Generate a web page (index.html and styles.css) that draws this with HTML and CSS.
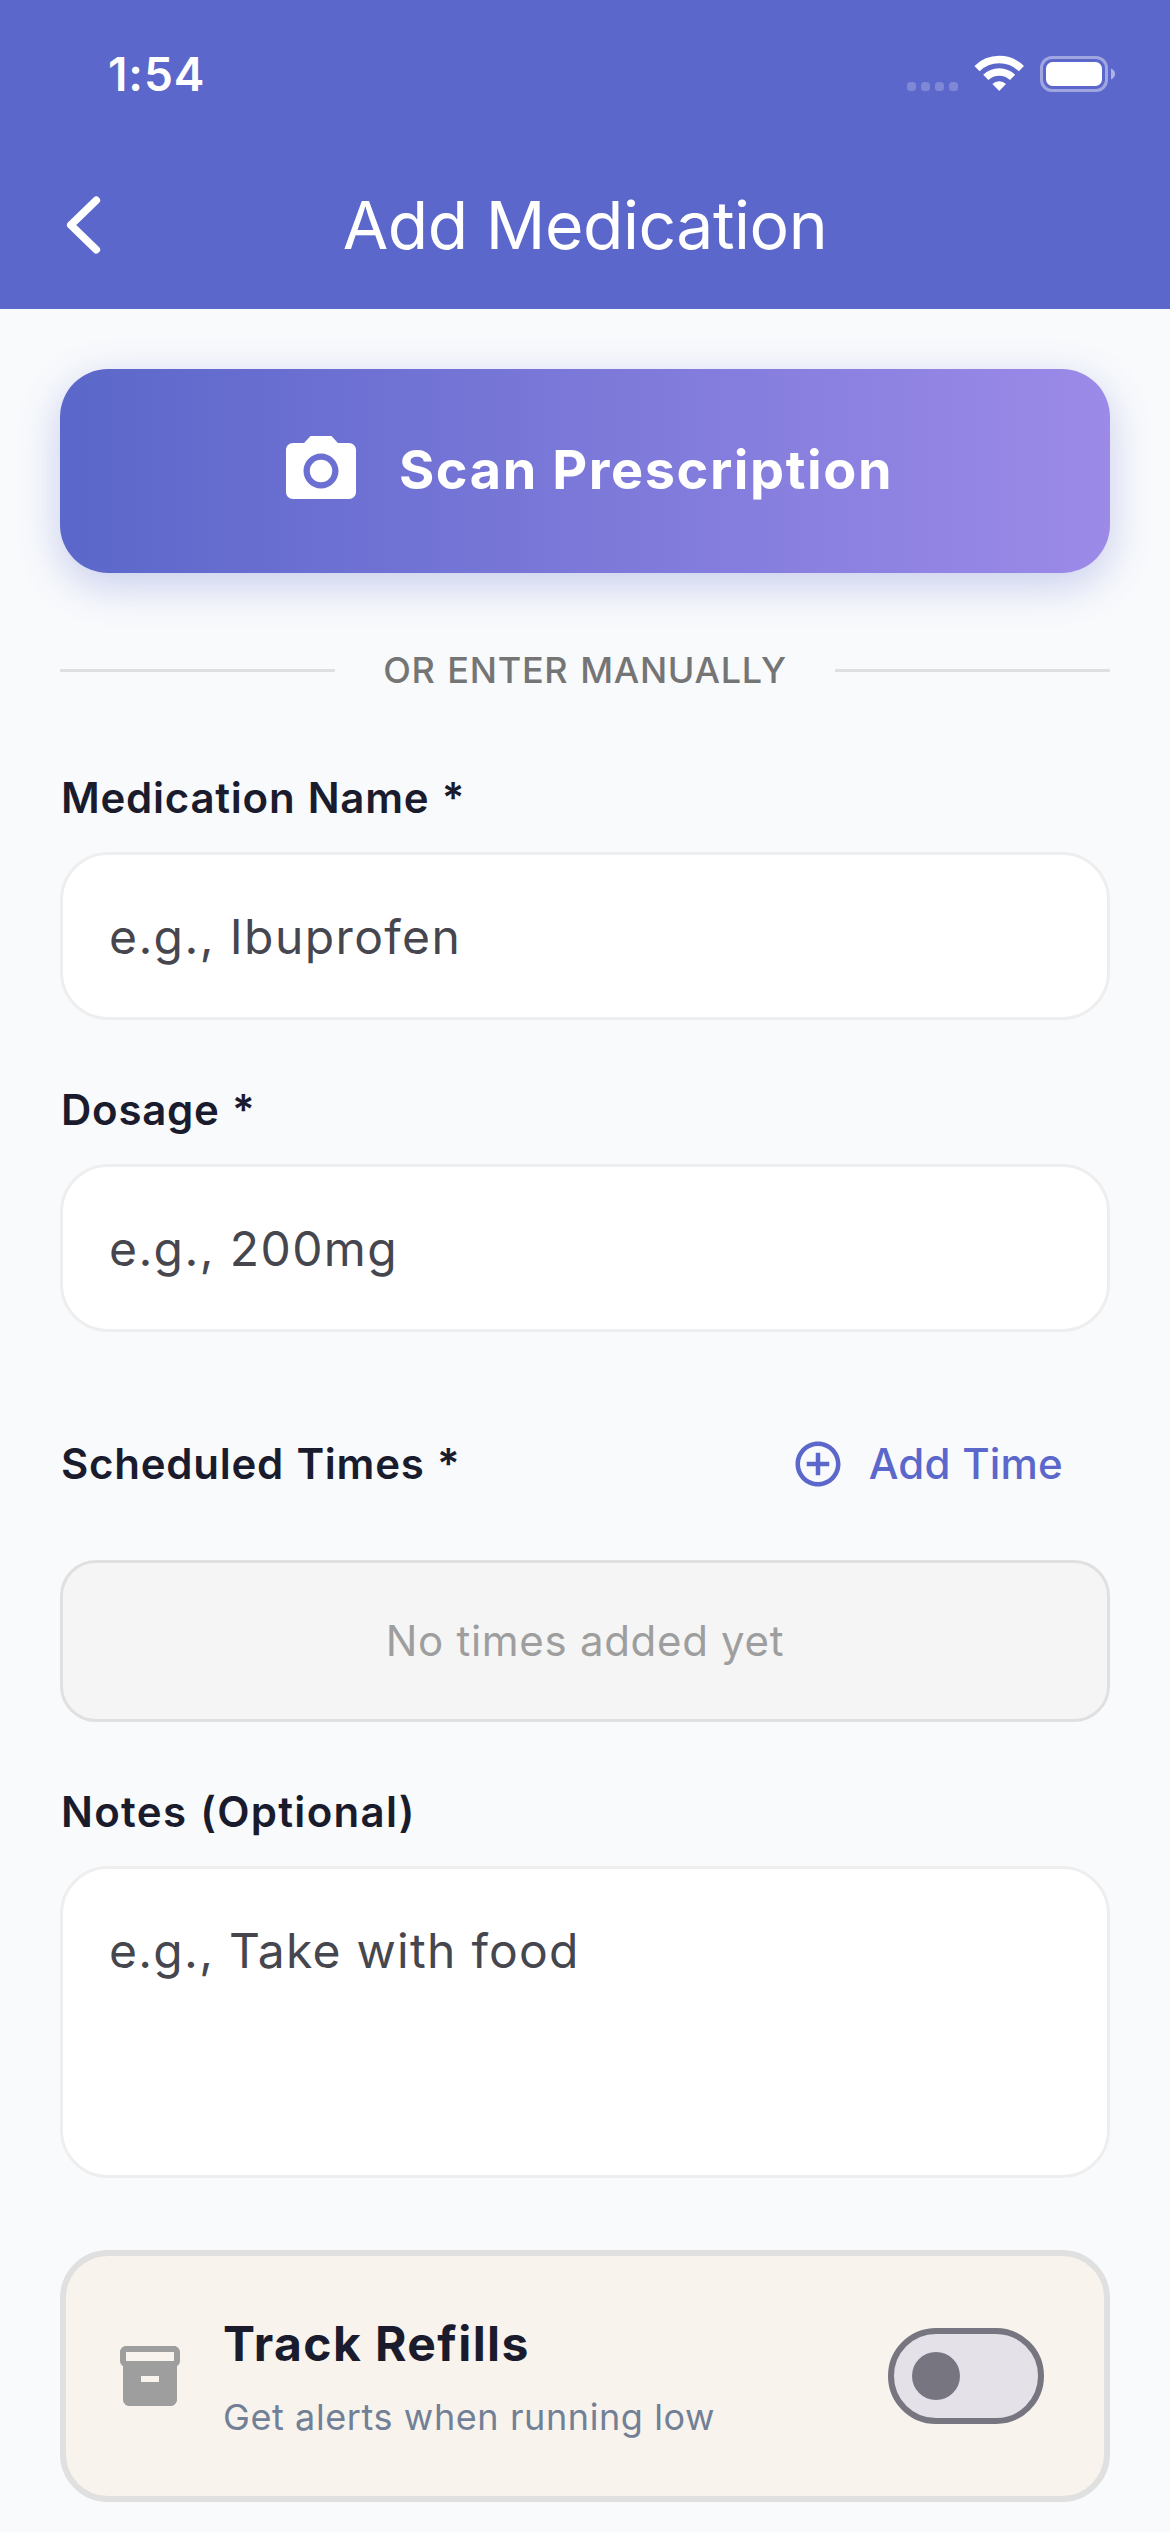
FILE: index.html
```
<!DOCTYPE html>
<html lang="en">
<head>
<meta charset="utf-8">
<title>Add Medication</title>
<link rel="stylesheet" href="styles.css">
</head>
<body>
<header class="header">
  <div class="status">
    <span class="time">1:54</span>
    <svg class="status-icons" width="208" height="40" viewBox="0 0 208 40" fill="#fff">
      <g opacity=".22">
        <rect x="0" y="28" width="9" height="9" rx="3.500"/>
        <rect x="14" y="28" width="9" height="9" rx="3.500"/>
        <rect x="28" y="28" width="9" height="9" rx="3.500"/>
        <rect x="42" y="28" width="9" height="9" rx="3.500"/>
      </g>
      <g fill="none" stroke="#fff" stroke-width="7.4">
        <path d="M70 14.6a31.8 31.8 0 0 1 44.400 0"/>
        <path d="M78.800 23.400a19.200 19.200 0 0 1 26.800 0"/>
      </g>
      <path d="M92.200 37l-6.800-7a9.800 9.800 0 0 1 13.600 0z"/>
      <rect x="134.500" y="3.500" width="65" height="33" rx="10.500" fill="none" stroke="#fff" stroke-width="3" opacity=".42"/>
      <rect x="139" y="8" width="56" height="24" rx="6.500"/>
      <path d="M204 14.500c2.600 1 4 3 4 5.500s-1.400 4.500-4 5.500z" opacity=".5"/>
    </svg>
  </div>
  <div class="app-bar">
    <svg class="back" width="42" height="66" viewBox="0 0 42 66" fill="none" stroke="#fff" stroke-width="7.600" stroke-linecap="round" stroke-linejoin="round"><path d="M34.300 8.300L8.800 33l25.500 24.700"/></svg>
    <h1 class="title">Add Medication</h1>
  </div>
</header>
<main class="form">
  <button class="scan">
    <svg width="84" height="84" viewBox="0 0 24 24" fill="#fff"><path d="M9 2L7.170 4H4c-1.100 0-2 .9-2 2v12c0 1.100.9 2 2 2h16c1.100 0 2-.9 2-2V6c0-1.100-.9-2-2-2h-3.170L15 2H9zm3 15c-2.760 0-5-2.240-5-5s2.240-5 5-5 5 2.240 5 5-2.240 5-5 5z"/><circle cx="12" cy="12" r="3.200"/></svg>
    <span class="scan-text">Scan Prescription</span>
  </button>
  <div class="divider"><span class="divider-text">OR ENTER MANUALLY</span></div>

  <label class="label">Medication Name *</label>
  <div class="field"><span class="hint">e.g., Ibuprofen</span></div>

  <label class="label next">Dosage *</label>
  <div class="field"><span class="hint">e.g., 200mg</span></div>

  <div class="times-row">
    <span class="label">Scheduled Times *</span>
    <button class="add-time">
      <svg width="54" height="54" viewBox="0 0 24 24" fill="currentColor"><path d="M13 7h-2v4H7v2h4v4h2v-4h4v-2h-4V7zm-1-5C6.480 2 2 6.480 2 12s4.480 10 10 10 10-4.480 10-10S17.520 2 12 2zm0 18c-4.410 0-8-3.590-8-8s3.590-8 8-8 8 3.590 8 8-3.590 8-8 8z"/></svg>
      <span>Add Time</span>
    </button>
  </div>
  <div class="empty">No times added yet</div>

  <label class="label next notes-label">Notes (Optional)</label>
  <div class="field notes"><span class="hint notes-hint">e.g., Take with food</span></div>

  <section class="refills">
    <svg width="72" height="72" viewBox="0 0 24 24" fill="#9e9e9e"><path d="M20 2H4c-1 0-2 .9-2 2v3.010c0 .72.43 1.340 1 1.690V20c0 1.100 1.100 2 2 2h14c.9 0 2-.9 2-2V8.700c.57-.35 1-.97 1-1.690V4c0-1.100-1-2-2-2zm-5 12H9v-2h6v2zm5-7H4V4h16v3z"/></svg>
    <div class="refills-text">
      <h2 class="refills-title">Track Refills</h2>
      <p class="refills-sub">Get alerts when running low</p>
    </div>
    <div class="switch"><span class="knob"></span></div>
  </section>
</main>
</body>
</html>
```
FILE: styles.css
```
* { box-sizing: border-box; margin: 0; padding: 0; }

body {
  width: 1170px;
  height: 2532px;
  overflow: hidden;
  background: #f8fafc;
  font-family: "Inter", "Liberation Sans", sans-serif;
  color: #1a1c2e;
}

svg { display: block; flex: none; }
button { border: 0; background: none; font: inherit; }

.header { height: 309px; background: #5b67ca; color: #fff; }

.status {
  height: 141px;
  padding: 7px 55px 0 108px;
  display: flex;
  align-items: center;
  justify-content: space-between;
}
.time { font-size: 46px; font-weight: 600; letter-spacing: 0.9px; line-height: 56px; }

.app-bar {
  height: 168px;
  padding: 0 62px;
  display: grid;
  grid-template-columns: 42px 1fr 42px;
  align-items: center;
}
.title {
  font-size: 66px;
  font-weight: 400;
  letter-spacing: -0.46px;
  line-height: 84px;
  text-align: center;
}

.form { padding: 60px 60px 0; display: flex; flex-direction: column; }

.scan {
  height: 204px;
  padding-left: 2px;
  display: flex;
  align-items: center;
  justify-content: center;
  gap: 36px;
  border-radius: 48px;
  background: linear-gradient(90deg, #5b67ca, #9c8ae8);
  box-shadow: 0 12px 42px rgba(91, 103, 202, 0.3);
  color: #fff;
}
.scan-text {
  padding-bottom: 3px;
  font-size: 54px;
  font-weight: 700;
  letter-spacing: 1.57px;
  line-height: 66px;
}

.divider {
  height: 51px;
  margin: 72px 0;
  display: flex;
  align-items: center;
  gap: 48px;
}
.divider::before,
.divider::after { content: ""; flex: 1; height: 3px; background: #e0e0e0; }
.divider-text {
  font-size: 36px;
  font-weight: 500;
  letter-spacing: 0.7px;
  word-spacing: 1.5px;
  line-height: 51px;
  color: #757575;
}

.label { padding-left: 1px; font-size: 42px; font-weight: 600; letter-spacing: 0.75px; line-height: 60px; word-spacing: 1px; }
.next { margin-top: 60px; }
.notes-label { letter-spacing: 1.3px; }

.field {
  height: 168px;
  margin-top: 24px;
  padding: 0 46px;
  display: flex;
  align-items: center;
  border: 3px solid #eee;
  border-radius: 48px;
  background: #fff;
}
.hint { padding-top: 1px; font-size: 48px; letter-spacing: 1.4px; line-height: 72px; color: #46464f; }
.notes { height: 312px; padding-top: 45px; align-items: flex-start; }
.notes-hint { letter-spacing: 1.27px; }

.times-row {
  height: 144px;
  margin-top: 60px;
  display: flex;
  align-items: center;
  justify-content: space-between;
}
.add-time {
  padding-right: 47px;
  display: flex;
  align-items: center;
  gap: 24px;
  font-size: 42px;
  font-weight: 500;
  letter-spacing: 0.22px;
  line-height: 60px;
  color: #5b67ca;
}

.empty {
  height: 162px;
  margin-top: 24px;
  display: flex;
  align-items: center;
  justify-content: center;
  border: 3px solid #e0e0e0;
  border-radius: 36px;
  background: #f5f5f5;
  font-size: 42px;
  letter-spacing: 0.7px;
  line-height: 60px;
  color: #9e9e9e;
}

.refills {
  height: 252px;
  margin-top: 72px;
  padding: 0 60px 0 48px;
  display: flex;
  align-items: center;
  gap: 36px;
  border: 6px solid #e0e0e0;
  border-radius: 48px;
  background: #f8f3ec;
}
.refills-text { flex: 1; display: flex; flex-direction: column; gap: 12px; padding-left: 1px; }
.refills-title { font-size: 48px; font-weight: 700; letter-spacing: 1.41px; line-height: 70px; }
.refills-sub { font-size: 36px; letter-spacing: 0.59px; line-height: 52px; color: #718096; }

.switch {
  width: 156px;
  height: 96px;
  padding-left: 18px;
  display: flex;
  align-items: center;
  border: 6px solid #777680;
  border-radius: 48px;
  background: #e4e1e9;
}
.knob { width: 48px; height: 48px; border-radius: 50%; background: #777680; }
```
